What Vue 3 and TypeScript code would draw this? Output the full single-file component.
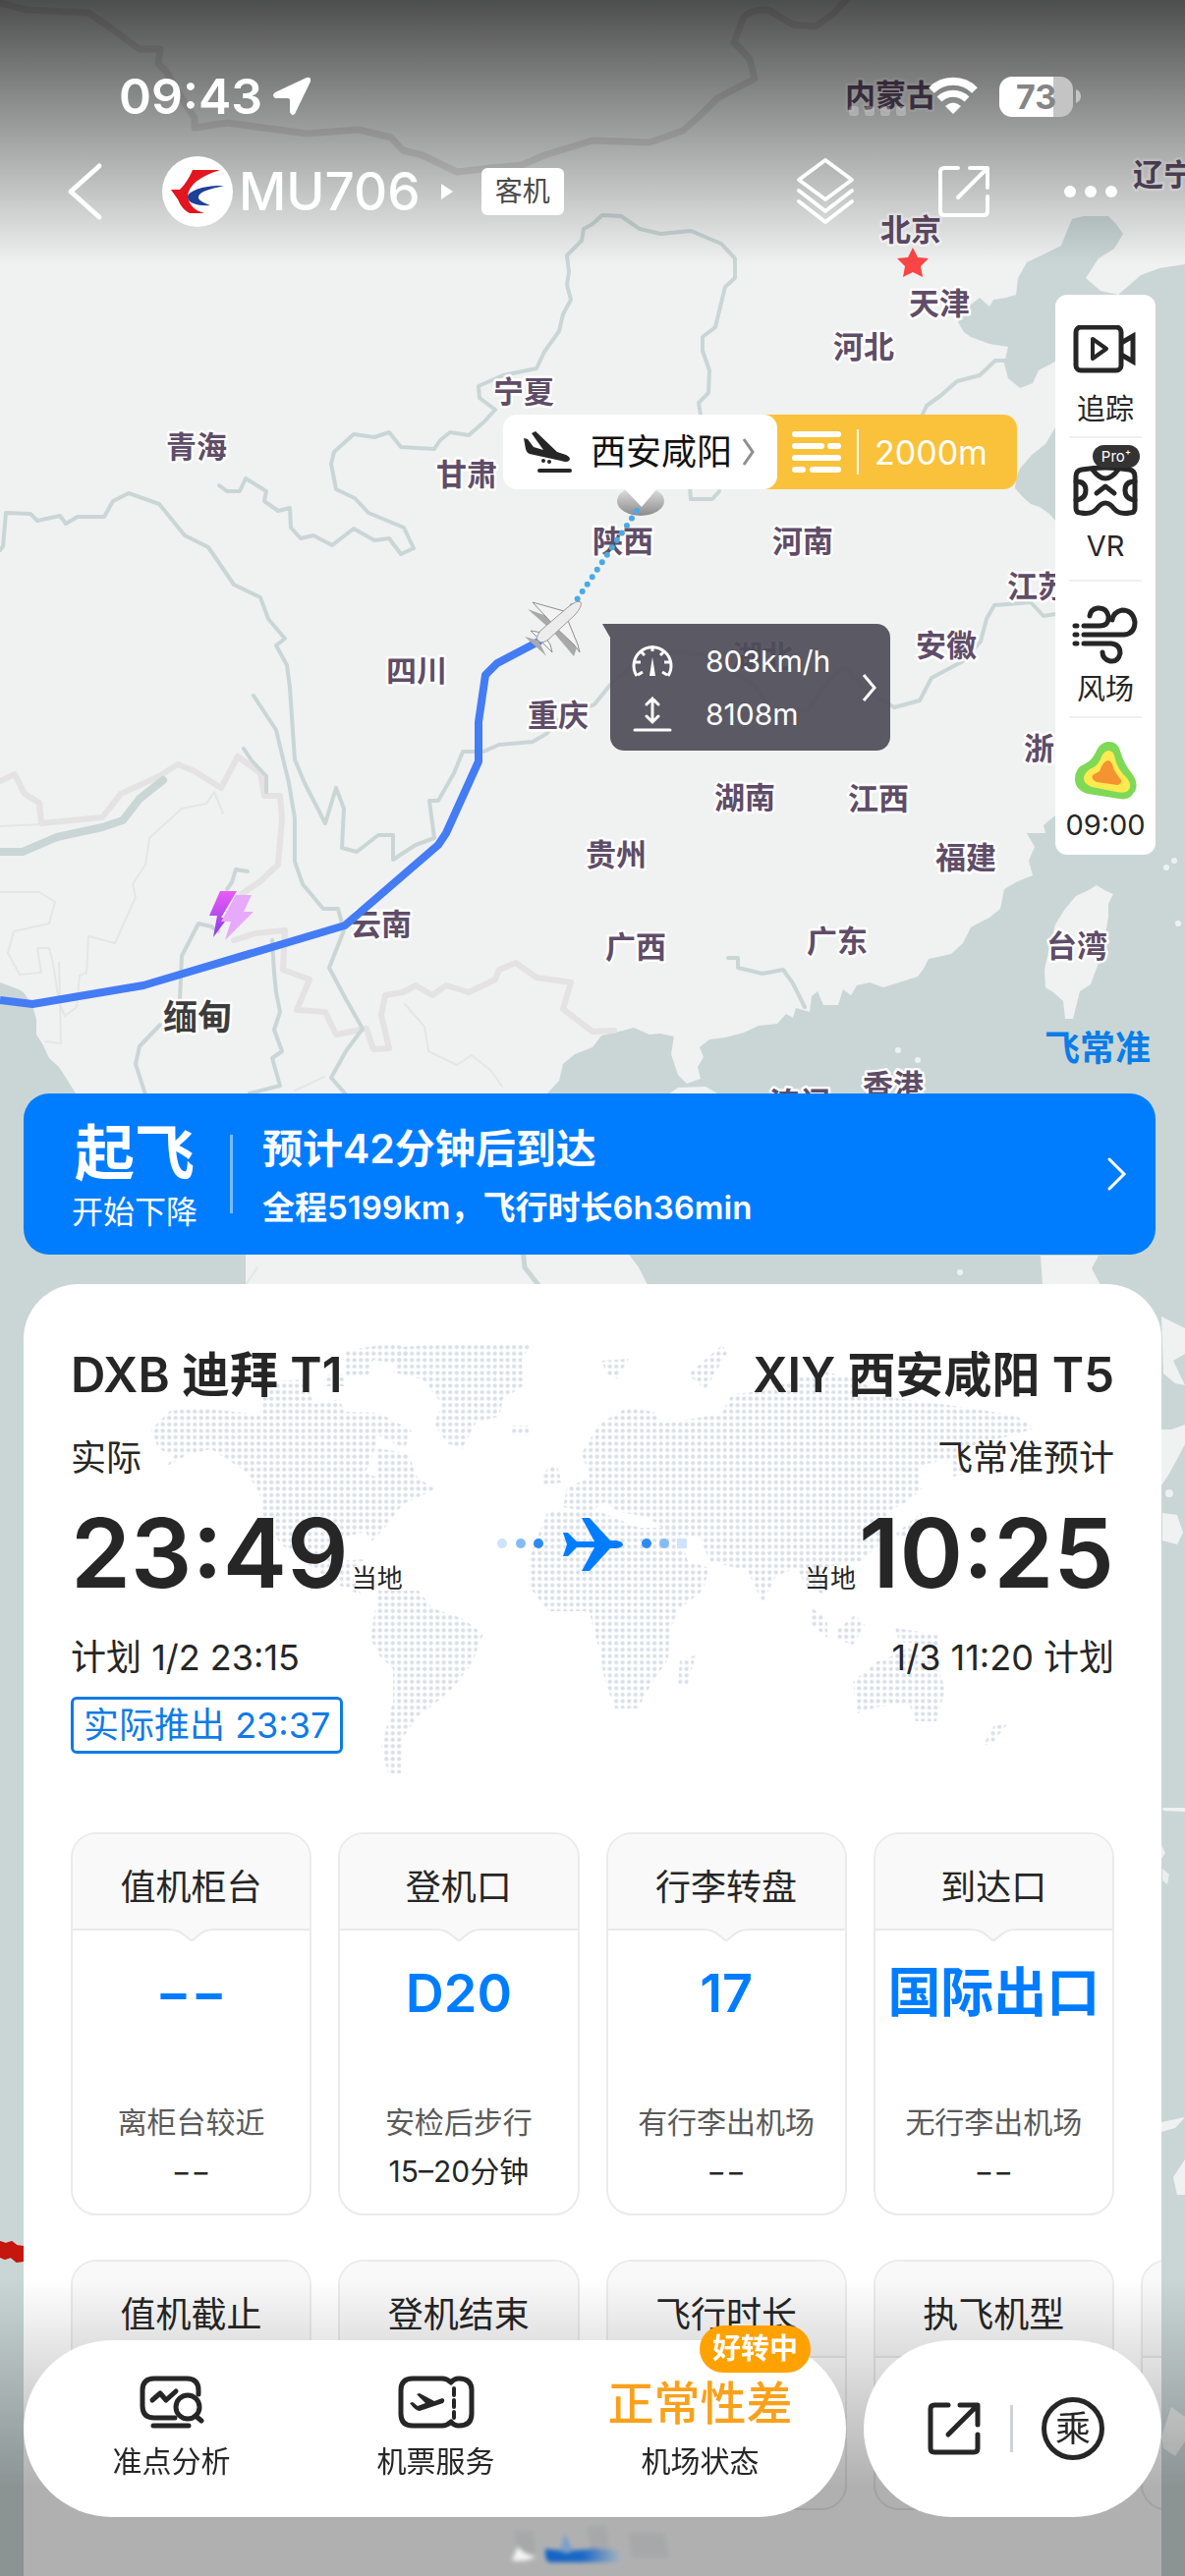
<script setup lang="ts">
interface MapLabel {
  name: string
  x: number
  y: number
}

interface InfoCard {
  title: string
  value: string
  hint: string
  note: string
}

const labels: MapLabel[] = [
  { name: '内蒙古', x: 860, y: 108 },
  { name: '辽宁', x: 1153, y: 189 },
  { name: '北京', x: 896, y: 245 },
  { name: '天津', x: 925, y: 320 },
  { name: '河北', x: 848, y: 364 },
  { name: '宁夏', x: 502, y: 410 },
  { name: '青海', x: 169, y: 466 },
  { name: '甘肃', x: 444, y: 494 },
  { name: '陕西', x: 603, y: 562 },
  { name: '河南', x: 786, y: 562 },
  { name: '江苏', x: 1025, y: 608 },
  { name: '安徽', x: 932, y: 668 },
  { name: '湖北', x: 745, y: 679 },
  { name: '四川', x: 393, y: 694 },
  { name: '重庆', x: 537, y: 739 },
  { name: '浙江', x: 1042, y: 773 },
  { name: '湖南', x: 727, y: 823 },
  { name: '江西', x: 863, y: 824 },
  { name: '贵州', x: 596, y: 881 },
  { name: '福建', x: 952, y: 884 },
  { name: '云南', x: 357, y: 952 },
  { name: '广西', x: 616, y: 975 },
  { name: '广东', x: 821, y: 969 },
  { name: '台湾', x: 1065, y: 974 },
  { name: '香港', x: 878, y: 1116 },
  { name: '澳门', x: 783, y: 1134 },
]

const rivers: string[] = [
  '1032,367 1013,367 997,382 974,388 957,403 943,413 935,430',
  '732,500 725,508 703,508 702,496 713,422 711,410 721,400 722,377 715,357 715,343 728,333 738,292 748,283 748,263 734,248 703,235 672,238 651,233 632,220 613,219 603,228 594,233 592,245 577,260 579,277 577,290 581,305 573,320 569,337 554,358 546,375 512,382 487,393 488,405 504,417 492,430 477,443 458,440 448,448 442,457 408,455 396,440 381,445 360,442 340,460 337,472 342,498 361,507 375,522 411,537 421,558 408,564 396,548 381,550 360,538 338,555 319,545 306,548 296,537 295,517 283,520 269,510 271,500 250,487 244,500 231,500 223,494',
  '0,560 3,556 6,522 31,523 38,530 61,525 67,533 79,526 106,526 115,510 131,502 162,513 188,545 212,557 238,595 265,608 273,630 290,650 281,657 292,677 295,700 300,773 310,797 331,838 342,802 350,823 348,863 363,867 385,850 400,850 400,875 423,860 442,853 437,815 446,815 462,787 471,765 492,765 508,758 542,755 556,747 568,733 605,717 621,697 650,672 688,663 720,667 767,697 790,728 822,723 845,690 860,680 885,705 910,720 936,713 948,690 980,673 998,653 1004,630 1012,616 1049,613 1062,627 1074,625',
  '258,708 281,743 294,797 300,833 300,877 308,900 329,925 344,925 350,947 335,985 352,1017 369,1047 352,1070 337,1097 352,1114',
  '248,762 256,774 271,790 271,806',
  '277,957 279,990 281,1010 285,1030 279,1048 287,1070 277,1077 285,1105 254,1113',
  '252,887 240,885 236,898 231,905',
  '222,948 215,943 202,940 185,973 183,1017',
  '163,1043 142,1065 138,1083 148,1114',
  '741,975 751,975 751,985 776,991 797,987 807,1001 819,1025',
]

const flightCards: InfoCard[] = [
  { title: '值机柜台', value: '−−', hint: '离柜台较近', note: '−−' },
  { title: '登机口', value: 'D20', hint: '安检后步行', note: '15–20分钟' },
  { title: '行李转盘', value: '17', hint: '有行李出机场', note: '−−' },
  { title: '到达口', value: '国际出口', hint: '无行李出机场', note: '−−' },
]

const moreCards: string[] = ['值机截止', '登机结束', '飞行时长', '执飞机型', '']
</script>

<template>
  <div class="page">
    <div class="map">
      <svg class="map-art" viewBox="0 0 1206 2622" aria-hidden="true">
        <rect width="1206" height="2622" fill="#cad6d6" />
        <path
          fill="#f0f1f1"
          d="M0 0H1206V269L1180 273L1161 280L1138 300L1120 296L1105 283L1118 263L1134 253L1143 238L1136 228L1128 220L1103 220L1091 223L1084 240L1080 250L1062 259L1045 267L1036 283L1034 300L1024 303L1011 305L1007 312L997 303L988 310L975 328L981 338L988 343L1007 350L1026 353L1022 370L1026 385L1038 395L1051 390L1057 377L1074 368L1150 350L1150 410L1074 435L1064 452L1050 463L1044 470L1038 477L1034 488L1033 497L1041 506L1049 513L1058 516L1068 523L1074 530L1110 600L1150 680L1140 770L1096 812L1074 830L1062 840L1064 848L1045 848L1053 862L1047 876L1051 891L1036 897L1022 905L1018 925L1007 934L999 938L988 944L980 960L968 971L945 976L940 986L934 994L915 1000L899 1005L885 1000L872 1003L866 1013L858 1007L853 1023L838 1023L832 1009L826 1014L824 1030L810 1026L807 1036L800 1032L791 1042L772 1044L757 1051L738 1056L722 1058L712 1066L716 1076L710 1086L713 1098L699 1103L690 1094L683 1073L686 1055L672 1052L661 1053L645 1046L626 1051L612 1054L603 1066L585 1073L573 1083L569 1100L557 1113L560 1200L600 1240L641 1278L650 1290L659 1308V1360H250V1270L160 1180L77 1113L69 1100L60 1086L50 1077L43 1062L37 1053L37 1038L33 1023L24 1010L19 1007L0 1000Z"
        />
        <path
          fill="#f0f1f1"
          d="M1116 901L1124 906L1133 910L1128 920V934L1124 955L1118 980L1110 1002L1099 1009L1095 1025L1092 1037H1084L1082 1019L1072 1010L1064 1005L1063 987L1068 965L1074 941L1084 925L1095 912L1108 906Z M680 1114L690 1107L718 1106L732 1114Z M1059 1278H1118L1111 1291L1120 1308V1340H1063Z M1182 1340L1206 1352V1378L1194 1385L1206 1410L1196 1408L1184 1398Z M1182 1455H1192L1206 1450V1470L1190 1500L1182 1512Z M1183 1540L1198 1542L1204 1560L1198 1572L1183 1568Z M1182 2160L1206 2155L1196 2166L1182 2170Z M1206 2198L1194 2216L1198 2234H1206Z M1183 1840H1206V1844L1184 1843Z"
        />
        <path
          fill="#eceeee"
          d="M1182 2480L1192 2450L1206 2460V2485L1196 2500L1184 2492Z M1182 1878L1186 1886L1182 1892Z M1183 1902L1190 1908L1188 1918L1183 1914Z"
        />
        <g fill="#eef1f1">
          <circle cx="914" cy="1069" r="3" />
          <circle cx="934" cy="1079" r="3" />
          <circle cx="1187" cy="883" r="3" />
          <circle cx="1195" cy="876" r="3" />
          <circle cx="1199" cy="940" r="3" />
          <circle cx="977" cy="1295" r="3" />
          <circle cx="1190" cy="1520" r="4" />
        </g>
        <g fill="none" stroke-linejoin="round" stroke-linecap="round">
          <path
            stroke="#dcdcdd"
            stroke-width="7"
            d="M0 3L27 10L90 13L112 28L142 50H163L161 65L169 72L180 92L198 120V130L231 125L312 136L365 132L398 140L410 153L430 158L465 175L500 171L531 168L554 158L603 143L661 145L695 133L712 118L730 100L768 80L763 60L747 43L757 17Q766 9 782 10L807 25L830 27L849 13L861 0"
          />
          <path
            stroke="#e4e2e3"
            stroke-width="6"
            d="M0 795L15 788L25 808L40 817L42 838L104 832L123 808L162 790L181 778L198 785L225 802L242 770L265 787L269 810L285 810L287 833L283 880L265 897L246 910 M238 957L260 950L290 947L288 987L315 997L302 1028L331 1030L342 1053L373 1047L380 1068L396 1067L388 1033L392 1013L410 1010L423 1003L440 1013L454 1003L477 1010L504 997L508 987L525 980L546 995L581 1000L573 1027L603 1050L625 1049"
          />
          <path
            stroke="#e5e5e6"
            stroke-width="2"
            d="M0 841L42 839 M227 828L218 806L210 818L185 823L152 853L148 880L135 900L138 913L117 960L90 953L88 990L81 993L78 1025L66 1034L60 1020L54 980L50 965L38 965L42 990L20 992L8 970L14 948L50 940L56 918L40 908H0 M412 1022L432 1045L436 1070L465 1084L480 1074L500 1090L511 1106 M60 980L62 1062L46 1060 M300 1110L330 1096 M250 1308L262 1290"
          />
          <polyline
            v-for="line in rivers"
            :key="line"
            :points="line"
            stroke="#cad6d6"
            stroke-width="4"
          />
          <path stroke="#cad6d6" stroke-width="8" d="M0 867H23L58 852L104 842L125 835L142 813L166 794" />
          <path stroke="#cad6d6" stroke-width="5" d="M530 1250L534 1290L548 1308" />
        </g>
        <path
          d="M0 2282L6 2284L12 2282L17 2286L24 2287V2301L17 2302L11 2297L5 2299L0 2297Z"
          fill="#c5160f"
          stroke="#c5160f"
          stroke-width="2"
          stroke-linejoin="round"
        />
        <g class="labels">
          <text v-for="l in labels" :key="l.name" :x="l.x" :y="l.y">{{ l.name }}</text>
          <text class="country" x="166" y="1048">缅甸</text>
        </g>
        <path
          d="M929 252L934 262L945 263L937 271L939 282L929 277L919 282L921 271L913 263L924 262Z"
          fill="#fb4545"
        />
        <defs>
          <linearGradient id="pinShade" x1="0" y1="0" x2="0" y2="1">
            <stop offset="0" stop-color="#e6e6e6" />
            <stop offset="1" stop-color="#8b8b8b" />
          </linearGradient>
          <linearGradient id="bolt" x1="0" y1="0" x2="0" y2="1">
            <stop offset="0" stop-color="#ea5cf6" />
            <stop offset="1" stop-color="#8b3ae6" />
          </linearGradient>
        </defs>
        <ellipse cx="652" cy="510" rx="24" ry="15" fill="url(#pinShade)" />
        <path d="M634 496H670L653 516Z" fill="#fff" />
        <path
          d="M648 520L582 618"
          stroke="#48aae4"
          stroke-width="6"
          stroke-linecap="round"
          stroke-dasharray="0 9"
          fill="none"
        />
        <path
          d="M0 1018L33 1022L146 1003L351 942L446 860L454 848L478 795L487 775V735L494 687L506 675L550 652"
          fill="none"
          stroke="#437cf5"
          stroke-width="8"
          stroke-linejoin="round"
        />
        <path d="M224 907L213 932H221L217 954L232 934H225L241 907Z" fill="url(#bolt)" />
        <path d="M240 911L225 938H235L229 957L258 928H248L256 911Z" fill="#e7a9fb" />
        <g stroke-linejoin="round">
          <path d="M537 620L570 632L588 656L584 668L562 642Z M534 648L548 652L556 668L552 664Z" fill="#a9a9a9" />
          <path
            d="M542 613L574 622L588 656L590 664L584 656L567 640Z M540 642L552 644L560 656L562 664L550 652Z"
            fill="#f3f3f3"
            stroke="#8e8e8e"
            stroke-width="1"
          />
          <path d="M548 652Q544 650 550 642L578 618Q588 610 591 613Q593 617 585 626L558 651Q551 656 548 652Z" fill="#ececec" stroke="#9b9b9b" stroke-width="1" />
        </g>
      </svg>

      <div class="dest">
        <button class="dest-name" type="button">
          <svg width="52" height="44" viewBox="0 0 52 44" aria-hidden="true">
            <path
              d="M2 8L6 9L12 17L22 20L10 3L14 1L36 22L45 25Q51 28 48 31Q46 33 40 31L8 24Q5 23 4 19Z"
              fill="#262626"
            />
            <circle cx="22" cy="31" r="2" fill="#262626" />
            <circle cx="28" cy="32" r="2" fill="#262626" />
            <path d="M18 41H49" stroke="#262626" stroke-width="4" stroke-linecap="round" />
          </svg>
          <span>西安咸阳</span>
          <svg width="14" height="28" viewBox="0 0 14 28" aria-hidden="true">
            <path d="M2 1L11 14L2 27" fill="none" stroke="#8f8f8f" stroke-width="3" />
          </svg>
        </button>
        <div class="dest-vis">
          <svg width="50" height="44" viewBox="0 0 50 44" aria-hidden="true">
            <path
              d="M3 4H47M3 16H30M39 16H47M3 28H47M3 40H11M21 40H47"
              stroke="#fff"
              stroke-width="6"
              stroke-linecap="round"
            />
          </svg>
          <i></i>
          <span>2000m</span>
        </div>
      </div>

      <button class="speed" type="button">
        <svg class="speed-tail" width="20" height="24" viewBox="0 0 20 24" aria-hidden="true">
          <path d="M0 0H8V14Z" fill="#5b5965" />
        </svg>
        <span class="speed-rows">
          <span class="speed-row">
            <svg width="44" height="36" viewBox="0 0 44 36" aria-hidden="true">
              <path
                d="M6 33A19 19 0 1 1 38 33M4 19H10M34 19H40M22 2V8M10 8L14 12M34 8L30 12M7 32L12 29M37 32L32 29"
                fill="none"
                stroke="#fff"
                stroke-width="3"
              />
              <path d="M22 14L25 33H19Z" fill="#fff" />
            </svg>
            803km/h
          </span>
          <span class="speed-row">
            <svg width="44" height="36" viewBox="0 0 44 36" aria-hidden="true">
              <path
                d="M22 2V25M16 8L22 2L28 8M16 20L22 26L28 20M4 34H40"
                fill="none"
                stroke="#fff"
                stroke-width="3"
                stroke-linecap="round"
              />
            </svg>
            8108m
          </span>
        </span>
        <svg width="16" height="30" viewBox="0 0 16 30" aria-hidden="true">
          <path d="M2 2L13 15L2 28" fill="none" stroke="#fff" stroke-width="3" />
        </svg>
      </button>
    </div>

    <header class="top">
      <div class="status">
        <span class="clock">09:43</span>
        <svg width="42" height="42" viewBox="0 0 42 42" aria-hidden="true">
          <path
            d="M36 2L4 17Q0 20 4 23H17Q19 23 19 26V37Q21 42 24 39L40 6Q41 1 36 2Z"
            fill="#fff"
          />
        </svg>
        <div class="status-right">
          <span class="signal"><i></i><i></i><i></i><i></i></span>
          <svg width="52" height="40" viewBox="0 0 52 40" aria-hidden="true">
            <path d="M4 14A31 31 0 0 1 48 14" fill="none" stroke="#fff" stroke-width="8" />
            <path d="M12 23A20 20 0 0 1 40 23" fill="none" stroke="#fff" stroke-width="7" />
            <path d="M18 30Q26 23 34 30L26 38Z" fill="#fff" />
          </svg>
          <span class="battery">73</span>
          <svg width="5" height="14" viewBox="0 0 5 14" aria-hidden="true">
            <path d="M0 0Q5 2 5 7T0 14Z" fill="#c4c4c4" />
          </svg>
        </div>
      </div>
      <nav class="nav">
        <button type="button" class="back" aria-label="返回">
          <svg width="40" height="60" viewBox="0 0 40 60">
            <path
              d="M36 4L7 30L36 56"
              fill="none"
              stroke="#fff"
              stroke-width="5"
              stroke-linecap="round"
              stroke-linejoin="round"
            />
          </svg>
        </button>
        <svg class="airline" width="72" height="72" viewBox="0 0 72 72" aria-hidden="true">
          <circle cx="36" cy="36" r="36" fill="#fff" />
          <path d="M31 14H59Q27 24 26 41Q28 54 43 58H28Q20 54 16 44L9 34H18Q26 26 31 14Z" fill="#e3151f" />
          <path d="M63 30C45 29 25 35 26 42C26 48 38 51 49 50C41 47 36 44 37 41C38 36 50 33 63 30Z" fill="#1e3f98" />
        </svg>
        <h1>MU706</h1>
        <svg class="caret" width="14" height="18" viewBox="0 0 14 18" aria-hidden="true">
          <path d="M1 1L13 9L1 17Z" fill="#fff" />
        </svg>
        <span class="tag">客机</span>
        <div class="nav-actions">
          <button type="button" aria-label="图层">
            <svg width="80" height="72" viewBox="-8 0 80 72" fill="none" stroke="#fff" stroke-width="4" stroke-linejoin="round" stroke-linecap="round">
              <path d="M32 4L59 24L32 44L5 24Z M5 35L32 56L59 35 M5 46L32 67L59 46" />
            </svg>
          </button>
          <button type="button" aria-label="分享">
            <svg width="60" height="60" viewBox="0 0 60 60" fill="none" stroke="#fff" stroke-width="4" stroke-linejoin="round" stroke-linecap="round">
              <path d="M24 6H10Q6 6 6 10V50Q6 54 10 54H50Q54 54 54 50V35M36 6H54V26M53 7L24 36" />
            </svg>
          </button>
          <button type="button" aria-label="更多">
            <svg width="56" height="16" viewBox="0 0 56 16" fill="#fff">
              <circle cx="7" cy="8" r="6" />
              <circle cx="28" cy="8" r="6" />
              <circle cx="49" cy="8" r="6" />
            </svg>
          </button>
        </div>
      </nav>
    </header>

    <aside class="tools">
      <button type="button" class="tool tall">
        <svg width="68" height="60" viewBox="0 0 68 60" fill="none" stroke="#262626" stroke-width="5">
          <rect x="4" y="2" width="46" height="44" rx="5" />
          <path d="M50 18L62 11V37L50 30" />
          <path d="M21 14L35 24L21 34Z" stroke-width="4" stroke-linejoin="round" />
        </svg>
        <span>追踪</span>
      </button>
      <button type="button" class="tool tall vr">
        <b class="pro">Pro⁺</b>
        <svg width="68" height="60" viewBox="0 0 68 60" fill="none" stroke="#262626" stroke-width="5" stroke-linejoin="round" stroke-linecap="round">
          <path d="M10 8Q34 4 58 8Q64 9 64 15V47Q64 52 59 52Q48 54 43 48Q34 36 25 48Q20 54 9 52Q4 52 4 47V15Q4 9 10 8Z" />
          <path d="M21 8Q34 26 47 8M4 20Q14 20 14 29T4 39M64 20Q54 20 54 29T64 39" />
          <path d="M25 32L34 25L43 32" />
        </svg>
        <span>VR</span>
      </button>
      <button type="button" class="tool">
        <svg width="68" height="60" viewBox="0 0 68 60" fill="none" stroke="#262626" stroke-width="5" stroke-linecap="round">
          <path d="M3 21H5M12 21H28Q38 21 37 11Q35 2 26 3Q19 4 18 11M3 30H5M12 30H53Q64 29 64 17Q62 5 51 5Q42 7 41 15M3 39H5M12 39H40Q49 40 49 49Q47 58 39 57Q31 55 31 48" />
        </svg>
        <span>风场</span>
      </button>
      <button type="button" class="tool">
        <svg width="68" height="60" viewBox="0 0 68 60">
          <path d="M36 1Q46 0 49 10Q52 22 60 32Q70 45 62 54Q58 61 48 59L16 54Q3 50 3 39Q3 27 14 23Q20 20 24 12Q28 2 36 1Z" fill="#7ed957" />
          <path d="M37 10Q43 10 44 19Q47 30 56 38Q62 46 57 51Q53 54 45 52L20 47Q11 43 12 37Q14 30 22 27Q28 23 30 16Q33 10 37 10Z" fill="#fdea50" />
          <path d="M37 20Q41 21 42 28Q45 34 50 40Q51 44 46 45L25 42Q19 39 21 35L28 31Q32 20 37 20Z" fill="#f59331" />
        </svg>
        <span>09:00</span>
      </button>
    </aside>

    <p class="brand">飞常准</p>

    <a class="banner" href="#flight">
      <span class="phase">
        <strong>起飞</strong>
        <span>开始下降</span>
      </span>
      <i></i>
      <span class="eta">
        <strong>预计42分钟后到达</strong>
        <span>全程5199km，飞行时长6h36min</span>
      </span>
      <svg width="22" height="36" viewBox="0 0 22 36" aria-hidden="true">
        <path d="M3 3L18 18L3 33" fill="none" stroke="#fff" stroke-width="3" stroke-linecap="round" />
      </svg>
    </a>

    <main id="flight" class="sheet">
      <svg class="world" viewBox="0 0 1158 520" aria-hidden="true">
        <defs>
          <pattern id="dots" width="6.5" height="6.55" patternUnits="userSpaceOnUse">
            <circle cx="3.2" cy="3.2" r="2.1" fill="#d9dfe8" />
          </pattern>
        </defs>
        <g fill="url(#dots)" transform="translate(-24 -1308)">
          <path d="M154 1456L173 1437L204 1434L265 1441L266 1408L310 1405L320 1430L346 1425L350 1438L385 1439L419 1457L412 1475L385 1462L380 1480L372 1500L385 1505L382 1475L415 1480L425 1505L443 1517L410 1532L390 1558L378 1570L372 1560L340 1568L345 1590L372 1588L355 1600L368 1625L340 1612L319 1597L285 1572L268 1545L264 1520L250 1499L215 1476L190 1482L169 1494L178 1482L161 1476Z" />
          <path d="M350 1376L400 1368L420 1375L405 1390L380 1385L375 1400L352 1402L350 1390Z M330 1400H350V1412H330Z" />
          <path d="M408 1372L470 1368L540 1370L531 1385L533 1411L512 1425L508 1443L485 1448L470 1476L455 1470L442 1450L450 1430L430 1405L400 1398Z" />
          <path d="M521 1452H538V1462H521Z" />
          <path d="M385 1620H426L440 1638L470 1648L492 1664L480 1695L460 1720L445 1733L425 1748L410 1770L408 1806H395L388 1780L400 1733V1700L385 1685L377 1668Z" />
          <path d="M558 1538L611 1540L650 1556L690 1556L700 1590L722 1597L715 1620L690 1640L682 1660L680 1690L664 1713L649 1740H626L615 1710L610 1680L603 1657L600 1641H558L538 1615V1588Z" />
          <path d="M553 1500L566 1490L572 1510L553 1512Z M573 1535L577 1515L600 1505L592 1480L610 1450L638 1434L665 1438L675 1450L705 1445L734 1440L745 1420L776 1417L834 1396L870 1404L903 1423L980 1433L1034 1442L1053 1455L1026 1463L980 1475L984 1500L970 1504V1485L934 1493L938 1517L922 1530L903 1540L895 1573L876 1590L834 1597L840 1625L820 1615L811 1597L790 1605L776 1632L761 1600L722 1590L712 1565L680 1562L660 1545L630 1540L615 1530L600 1540Z" />
          <path d="M826 1637L842 1650V1668L826 1655Z M852 1660L870 1645L880 1655L868 1675L852 1670Z M911 1658L955 1665V1676L915 1672Z M868 1713L891 1693L912 1685L925 1678L940 1690L950 1675L955 1700L962 1720L953 1753H932L925 1735L895 1738L872 1745Z M1012 1757L1026 1755L1010 1775L1000 1778Z M692 1690L708 1686L700 1715H690Z M700 1400L735 1370L740 1378L718 1415Z M612 1386L640 1384L628 1404L618 1400Z M912 1562L938 1540V1555L916 1568Z" />
        </g>
      </svg>

      <section class="route">
        <div class="end">
          <h2>DXB 迪拜 T1</h2>
          <p class="kind">实际</p>
          <p class="time"><strong>23:49</strong><span>当地</span></p>
          <p class="plan">计划 1/2 23:15</p>
          <p class="pushback">实际推出 23:37</p>
        </div>
        <svg class="flying" width="200" height="60" viewBox="0 0 200 60" aria-hidden="true">
          <circle cx="8" cy="27" r="5" fill="#cfe3fc" />
          <circle cx="27" cy="27" r="5" fill="#85bbf5" />
          <circle cx="45" cy="27" r="5" fill="#2b8bf3" />
          <path
            d="M70 16H75L84 25H102L89 1H97L118 24H124Q131 25 131 28T124 32H118L97 55H89L102 31H84L75 40H70L74 28Z"
            fill="#007dff"
          />
          <circle cx="155" cy="27" r="5" fill="#2b8bf3" />
          <circle cx="173" cy="27" r="5" fill="#85bbf5" />
          <rect x="186" y="22" width="10" height="10" fill="#cfe3fc" />
        </svg>
        <div class="end right">
          <h2>XIY 西安咸阳 T5</h2>
          <p class="kind">飞常准预计</p>
          <p class="time"><span>当地</span><strong>10:25</strong></p>
          <p class="plan">1/3 11:20 计划</p>
        </div>
      </section>

      <section class="cards">
        <article v-for="c in flightCards" :key="c.title" class="card">
          <h3>{{ c.title }}</h3>
          <svg class="notch" width="46" height="14" viewBox="0 0 46 14" aria-hidden="true">
            <path d="M0 0H46V1Q36 1 30 7L25 11Q23 13 21 11L16 7Q10 1 0 1Z" fill="#f9f9f9" />
            <path d="M0 1Q10 1 16 7L21 11Q23 13 25 11L30 7Q36 1 46 1" fill="none" stroke="#e9e9e9" stroke-width="2" />
          </svg>
          <p class="value">{{ c.value }}</p>
          <p class="hint">{{ c.hint }}</p>
          <p class="note">{{ c.note }}</p>
        </article>
      </section>

      <section class="cards second">
        <article v-for="t in moreCards" :key="t" class="card">
          <h3>{{ t }}</h3>
        </article>
      </section>
    </main>

    <div class="scrim">
      <svg width="180" height="48" viewBox="0 0 180 48" aria-hidden="true">
        <defs>
          <linearGradient id="fade" x1="0" y1="0" x2="1" y2="0">
            <stop offset="0" stop-color="#1163c4" />
            <stop offset="0.5" stop-color="#1a69c6" />
            <stop offset="1" stop-color="#a8b2be" />
          </linearGradient>
        </defs>
        <path d="M10 12H30L32 36H14Z M84 8L104 6L108 30H88Z M126 14H164L168 40H130Z" fill="#a7a8aa" />
        <path d="M8 42L14 28Q20 36 32 38Q24 44 8 42Z" fill="#f4f4f4" />
        <path d="M42 30Q60 34 92 30L118 32V44H46Q41 42 42 30Z" fill="url(#fade)" />
        <path d="M57 32L62 14L70 32Q64 38 57 32Z" fill="#7d9fca" />
      </svg>
    </div>

    <footer class="dock">
      <div class="pill main">
        <button type="button">
          <svg width="66" height="54" viewBox="0 0 66 54" fill="none" stroke="#262626" stroke-width="5" stroke-linecap="round" stroke-linejoin="round">
            <path d="M60 19V15Q60 3 48 3H15Q3 3 3 15V31Q3 43 15 43H36M14 51H50M13 25L21 18L27 25L37 16" />
            <circle cx="49" cy="32" r="12" />
            <path d="M57 41L63 46" />
          </svg>
          <span>准点分析</span>
        </button>
        <button type="button">
          <svg width="78" height="54" viewBox="0 0 78 54" fill="none" stroke="#262626" stroke-width="5" stroke-linejoin="round">
            <path d="M15 3H45Q50 3 54 7Q57 3 62 3Q75 3 75 15V39Q75 51 62 51Q57 51 54 47Q50 51 45 51H15Q3 51 3 39V15Q3 3 15 3Z" />
            <path d="M57 13V20M57 25V32M57 37V43" stroke-linecap="round" stroke-width="4" />
            <path d="M12 28L15 27L20 31L28 28L19 19L22 18L37 26L45 23Q49 24 46 28L22 36Q18 36 12 28Z" fill="#262626" stroke="none" />
          </svg>
          <span>机票服务</span>
        </button>
        <button type="button" class="state">
          <b class="badge">好转中</b>
          <strong>正常性差</strong>
          <span>机场状态</span>
        </button>
      </div>
      <div class="pill side">
        <button type="button" aria-label="分享">
          <svg width="56" height="56" viewBox="0 0 56 56" fill="none" stroke="#262626" stroke-width="5" stroke-linejoin="round" stroke-linecap="round">
            <path d="M22 4H8Q4 4 4 8V48Q4 52 8 52H48Q52 52 52 48V34M34 4H52V24M51 5L22 34" />
          </svg>
        </button>
        <i></i>
        <button type="button" class="ride">乘</button>
      </div>
    </footer>
  </div>
</template>

<style>
body {
  margin: 0;
}
</style>

<style scoped>
.page {
  position: relative;
  display: flex;
  flex-direction: column;
  min-height: 100vh;
  overflow: hidden;
  background: #cad6d6;
  color: #262626;
  font-family: Inter, "Noto Sans CJK SC", sans-serif;
}

h1,
h2,
h3,
p {
  margin: 0;
}

button {
  margin: 0;
  padding: 0;
  border: 0;
  background: none;
  color: inherit;
  font: inherit;
}

svg {
  display: block;
  flex: none;
}

.map {
  position: absolute;
  inset: 0;
}

.map-art {
  width: 100%;
}

.labels {
  fill: #5f4d68;
  stroke: #fff;
  stroke-width: 5px;
  stroke-linejoin: round;
  paint-order: stroke;
  font-size: 31px;
  font-weight: 700;
}

.country {
  fill: #3c3c3c;
  font-size: 35px;
}

.dest {
  position: absolute;
  left: 512px;
  top: 422px;
  display: flex;
}

.dest-name {
  position: relative;
  z-index: 1;
  display: flex;
  align-items: center;
  box-sizing: border-box;
  width: 279px;
  height: 76px;
  padding-left: 19px;
  gap: 18px;
  border-radius: 14px;
  background: #fff;
  color: #111;
  font-size: 36px;
  line-height: 52px;
}

.dest-name svg:last-child {
  margin-left: -8px;
}

.dest-vis {
  display: flex;
  align-items: center;
  box-sizing: border-box;
  width: 258px;
  height: 76px;
  margin-left: -14px;
  padding-left: 29px;
  gap: 16px;
  border-radius: 0 14px 14px 0;
  background: #fac23a;
  color: #fff;
  font-size: 34px;
}

.dest-vis i {
  width: 2px;
  height: 46px;
  background: #fff;
}

.speed {
  position: absolute;
  left: 621px;
  top: 635px;
  display: flex;
  align-items: center;
  justify-content: space-between;
  box-sizing: border-box;
  width: 285px;
  height: 129px;
  padding: 0 13px 0 21px;
  border-radius: 0 14px 14px 14px;
  background: rgba(78, 76, 88, 0.92);
  color: #fff;
  font-size: 30px;
}

.speed-tail {
  position: absolute;
  left: -8px;
  top: 0;
}

.speed-rows {
  display: flex;
  flex-direction: column;
  gap: 18px;
}

.speed-row {
  display: flex;
  align-items: center;
  height: 36px;
  gap: 32px;
}

.top {
  position: relative;
  box-sizing: border-box;
  height: 270px;
  padding-top: 66px;
  background: linear-gradient(rgba(0, 0, 0, 0.68), rgba(0, 0, 0, 0));
  color: #fff;
}

.status {
  display: flex;
  align-items: center;
  height: 64px;
  padding: 0 106px 0 121px;
  gap: 9px;
}

.clock {
  font-size: 50px;
  font-weight: 600;
}

.status-right {
  display: flex;
  align-items: center;
  margin-left: auto;
}

.signal {
  display: flex;
  gap: 6px;
  margin: 30px 22px 0 0;
}

.signal i {
  width: 10px;
  height: 10px;
  border-radius: 3px;
  background: rgba(255, 255, 255, 0.25);
}

.battery {
  width: 75px;
  height: 41px;
  margin: 0 3px 0 21px;
  border-radius: 13px;
  background: linear-gradient(90deg, #fff 73%, #c4c4c4 73%);
  color: #858585;
  font-size: 34px;
  font-weight: 700;
  line-height: 41px;
  text-align: center;
}

.nav {
  display: flex;
  align-items: center;
  height: 80px;
  margin-top: 25px;
  padding: 0 68px 0 65px;
}

.airline {
  margin-left: 60px;
}

.nav h1 {
  margin-left: 6px;
  font-size: 53px;
  font-weight: 500;
}

.caret {
  margin-left: 20px;
}

.tag {
  margin-left: 28px;
  padding: 0 14px;
  border-radius: 6px;
  background: #fff;
  color: #4a4a4a;
  font-size: 28px;
  line-height: 48px;
}

.nav-actions {
  display: flex;
  align-items: center;
  gap: 71px;
  margin-left: auto;
}

.tools {
  position: relative;
  display: flex;
  flex-direction: column;
  align-self: flex-end;
  width: 102px;
  margin: 30px 30px 0 0;
  border-radius: 12px;
  background: #fff;
}

.tool {
  position: relative;
  display: flex;
  flex-direction: column;
  align-items: center;
  justify-content: flex-end;
  box-sizing: border-box;
  height: 139px;
  margin: 0 14px;
  padding-bottom: 9px;
  gap: 8px;
  border-bottom: 2px solid #f0f0f0;
  font-size: 29px;
  line-height: 36px;
}

.tool.tall {
  height: 146px;
}

.tool.vr {
  padding-bottom: 16px;
}

.tool:last-child {
  padding-bottom: 12px;
  border-bottom: 0;
}

.pro {
  position: absolute;
  z-index: 1;
  top: 7px;
  right: 2px;
  width: 48px;
  height: 23px;
  border-radius: 12px;
  background: #333;
  color: #fff;
  font-size: 15px;
  font-weight: 400;
  line-height: 23px;
}

.brand {
  position: relative;
  align-self: flex-end;
  margin: 173px 35px 0 0;
  color: #0a7de8;
  font-size: 36px;
  font-weight: 700;
  line-height: 48px;
}

.banner {
  position: relative;
  display: flex;
  align-items: center;
  height: 164px;
  margin: 22px 30px 0 24px;
  padding: 0 28px 0 49px;
  border-radius: 26px;
  background: #007dff;
  color: #fff;
  text-decoration: none;
}

.banner > svg {
  margin-left: auto;
}

.banner i {
  width: 3px;
  height: 80px;
  margin: 0 30px 0 33px;
  background: #79bcff;
}

.phase,
.eta {
  display: flex;
  flex-direction: column;
}

.phase {
  align-items: center;
  gap: 4px;
  padding-top: 6px;
  font-size: 32px;
  line-height: 44px;
}

.phase strong {
  font-size: 61px;
  font-weight: 600;
  line-height: 68px;
}

.eta {
  gap: 8px;
  padding-top: 4px;
  font-size: 33px;
  font-weight: 600;
  line-height: 48px;
}

.eta strong {
  font-size: 41px;
  font-weight: 600;
  line-height: 56px;
}

.sheet {
  position: relative;
  flex: 1;
  margin: 30px 24px 0;
  padding: 63px 48px 66px;
  overflow: hidden;
  border-radius: 56px 56px 0 0;
  background: #fff;
}

.world {
  position: absolute;
  top: 0;
  left: 0;
  width: 100%;
}

.route {
  position: relative;
  display: grid;
  grid-template-columns: 1fr 200px 1fr;
  height: 415px;
}

.flying {
  margin-top: 174px;
}

.end {
  display: flex;
  flex-direction: column;
  align-items: flex-start;
  white-space: nowrap;
}

.end.right {
  align-items: flex-end;
}

.end h2 {
  font-size: 49px;
  font-weight: 600;
  line-height: 60px;
}

.kind {
  margin-top: 32px;
  font-size: 36px;
  line-height: 44px;
}

.time {
  display: flex;
  align-items: baseline;
  height: 100px;
  margin-top: 25px;
  gap: 3px;
  font-size: 26px;
  line-height: 100px;
}

.time strong {
  font-size: 98px;
  font-weight: 600;
}

.plan {
  margin-top: 34px;
  font-size: 36px;
  line-height: 44px;
}

.pushback {
  margin-top: 18px;
  padding: 0 10px;
  border: 3px solid #0f7be6;
  border-radius: 6px;
  color: #0f7be6;
  font-size: 36px;
  line-height: 52px;
}

.cards {
  position: relative;
  display: grid;
  grid-template-columns: repeat(4, 1fr);
  gap: 27px;
  margin-top: 80px;
}

.card {
  box-sizing: border-box;
  height: 390px;
  border: 2px solid #ebebeb;
  border-radius: 26px;
  text-align: center;
  white-space: nowrap;
}

.card h3 {
  height: 96px;
  border-bottom: 2px solid #e9e9e9;
  border-radius: 24px 24px 0 0;
  background: #f9f9f9;
  font-size: 36px;
  font-weight: 400;
  line-height: 108px;
}

.notch {
  margin: -2px auto 0;
}

.value {
  margin-top: 18px;
  color: #007dff;
  font-size: 54px;
  font-weight: 600;
  line-height: 68px;
}

.hint {
  margin-top: 77px;
  color: #5a5a5a;
  font-size: 30px;
  line-height: 40px;
}

.note {
  margin-top: 10px;
  font-size: 30px;
  line-height: 40px;
}

.second {
  grid-template-columns: repeat(4, 1fr) 245px;
  width: calc(100% + 272px);
  margin-top: 45px;
}

.second .card {
  height: 255px;
}

.scrim {
  position: fixed;
  right: 0;
  bottom: 0;
  left: 0;
  display: flex;
  align-items: flex-end;
  justify-content: center;
  box-sizing: border-box;
  height: 302px;
  padding-bottom: 10px;
  background: linear-gradient(rgba(0, 0, 0, 0), rgba(0, 0, 0, 0.31) 70%);
  pointer-events: none;
}

.scrim svg {
  filter: blur(2px);
}

.dock {
  position: fixed;
  right: 24px;
  bottom: 60px;
  left: 24px;
  display: flex;
  gap: 18px;
}

.pill {
  display: flex;
  align-items: center;
  box-sizing: border-box;
  height: 180px;
  border-radius: 90px;
  background: #fff;
}

.main {
  flex: 1;
  padding: 0 14px 0 16px;
}

.main button {
  position: relative;
  display: flex;
  flex: 1;
  flex-direction: column;
  align-items: center;
  justify-content: flex-end;
  height: 180px;
  padding-bottom: 36px;
  gap: 12px;
  font-size: 30px;
  line-height: 42px;
}

.main .state {
  gap: 6px;
}

.state strong {
  color: #f9a11b;
  font-size: 47px;
  font-weight: 500;
  line-height: 64px;
}

.badge {
  position: absolute;
  top: -15px;
  left: 134px;
  box-sizing: border-box;
  height: 48px;
  padding: 0 13px;
  border-radius: 24px;
  background: #ffa200;
  color: #fff;
  font-size: 29px;
  font-weight: 700;
  line-height: 48px;
  white-space: nowrap;
}

.side {
  justify-content: center;
  width: 303px;
  padding-left: 6px;
  gap: 29px;
}

.side i {
  width: 3px;
  height: 48px;
  background: #cfd3d9;
}

.ride {
  box-sizing: border-box;
  width: 64px;
  height: 64px;
  border: 5px solid #262626;
  border-radius: 32px;
  font-size: 36px;
  line-height: 52px;
}
</style>
